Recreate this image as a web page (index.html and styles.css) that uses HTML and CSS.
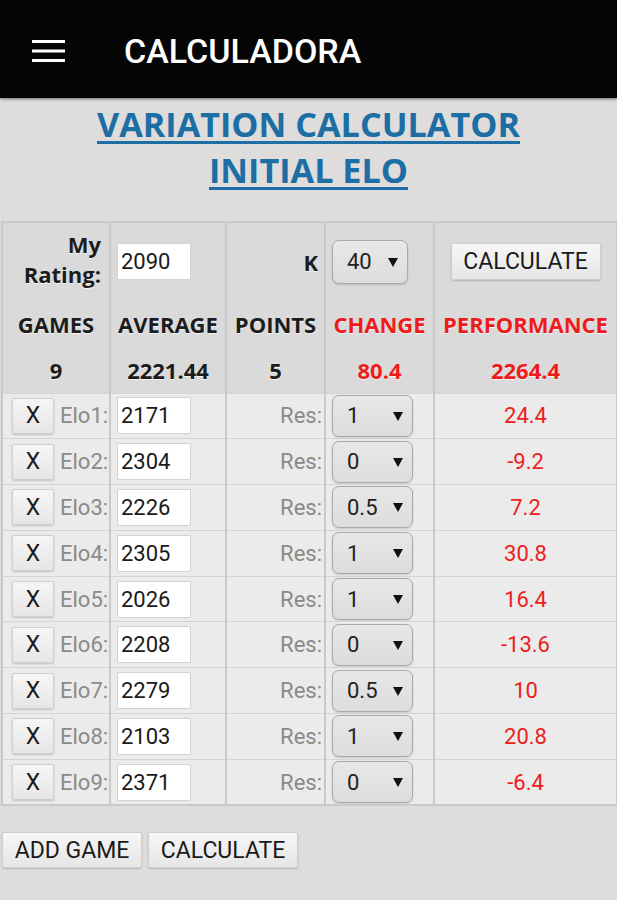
FILE: index.html
```html
<!DOCTYPE html>
<html lang="es">
<head>
<meta charset="utf-8">
<title>Calculadora</title>
<link rel="stylesheet" href="styles.css">
</head>
<body>
<header class="appbar">
  <span class="menu" aria-label="menu">
    <svg width="33" height="22" viewBox="0 0 33 22"><rect x="0" y="0" width="33" height="3" fill="#fff"/><rect x="0" y="9.5" width="33" height="3" fill="#fff"/><rect x="0" y="19" width="33" height="3" fill="#fff"/></svg>
  </span>
  <h1 class="appbar-title">CALCULADORA</h1>
</header>
<main class="content">
  <h2 class="page-title"><a href="#">VARIATION CALCULATOR<br>INITIAL ELO</a></h2>
  <table class="calc">
    <colgroup><col class="c1"><col class="c2"><col class="c3"><col class="c4"><col class="c5"></colgroup>
    <tbody class="summary">
      <tr class="r-top">
        <td class="lbl right rating">My<br>Rating:</td>
        <td class="pad-l"><input class="field" type="text" value="2090"></td>
        <td class="lbl right k">K</td>
        <td class="pad-l"><span class="select sel-k"><span>40</span><svg class="arrow" width="10" height="10" viewBox="0 0 10 10"><path d="M0 1h10L5 10z" fill="#111"/></svg></span></td>
        <td class="center"><button class="btn btn-top">CALCULATE</button></td>
      </tr>
      <tr class="r-head">
        <td>GAMES</td><td>AVERAGE</td><td>POINTS</td><td class="red">CHANGE</td><td class="red">PERFORMANCE</td>
      </tr>
      <tr class="r-vals">
        <td>9</td><td>2221.44</td><td>5</td><td class="red">80.4</td><td class="red">2264.4</td>
      </tr>
    </tbody>
    <tbody class="games">
      <tr><td><span class="game-lbl"><button class="btn btn-x">X</button><span class="elo">Elo1:</span></span></td><td class="pad-l"><input class="field" type="text" value="2171"></td><td class="res">Res:</td><td class="pad-l"><span class="select sel-r"><span>1</span><svg class="arrow" width="10" height="10" viewBox="0 0 10 10"><path d="M0 1h10L5 10z" fill="#111"/></svg></span></td><td class="out">24.4</td></tr>
      <tr><td><span class="game-lbl"><button class="btn btn-x">X</button><span class="elo">Elo2:</span></span></td><td class="pad-l"><input class="field" type="text" value="2304"></td><td class="res">Res:</td><td class="pad-l"><span class="select sel-r"><span>0</span><svg class="arrow" width="10" height="10" viewBox="0 0 10 10"><path d="M0 1h10L5 10z" fill="#111"/></svg></span></td><td class="out">-9.2</td></tr>
      <tr><td><span class="game-lbl"><button class="btn btn-x">X</button><span class="elo">Elo3:</span></span></td><td class="pad-l"><input class="field" type="text" value="2226"></td><td class="res">Res:</td><td class="pad-l"><span class="select sel-r"><span>0.5</span><svg class="arrow" width="10" height="10" viewBox="0 0 10 10"><path d="M0 1h10L5 10z" fill="#111"/></svg></span></td><td class="out">7.2</td></tr>
      <tr><td><span class="game-lbl"><button class="btn btn-x">X</button><span class="elo">Elo4:</span></span></td><td class="pad-l"><input class="field" type="text" value="2305"></td><td class="res">Res:</td><td class="pad-l"><span class="select sel-r"><span>1</span><svg class="arrow" width="10" height="10" viewBox="0 0 10 10"><path d="M0 1h10L5 10z" fill="#111"/></svg></span></td><td class="out">30.8</td></tr>
      <tr><td><span class="game-lbl"><button class="btn btn-x">X</button><span class="elo">Elo5:</span></span></td><td class="pad-l"><input class="field" type="text" value="2026"></td><td class="res">Res:</td><td class="pad-l"><span class="select sel-r"><span>1</span><svg class="arrow" width="10" height="10" viewBox="0 0 10 10"><path d="M0 1h10L5 10z" fill="#111"/></svg></span></td><td class="out">16.4</td></tr>
      <tr><td><span class="game-lbl"><button class="btn btn-x">X</button><span class="elo">Elo6:</span></span></td><td class="pad-l"><input class="field" type="text" value="2208"></td><td class="res">Res:</td><td class="pad-l"><span class="select sel-r"><span>0</span><svg class="arrow" width="10" height="10" viewBox="0 0 10 10"><path d="M0 1h10L5 10z" fill="#111"/></svg></span></td><td class="out">-13.6</td></tr>
      <tr><td><span class="game-lbl"><button class="btn btn-x">X</button><span class="elo">Elo7:</span></span></td><td class="pad-l"><input class="field" type="text" value="2279"></td><td class="res">Res:</td><td class="pad-l"><span class="select sel-r"><span>0.5</span><svg class="arrow" width="10" height="10" viewBox="0 0 10 10"><path d="M0 1h10L5 10z" fill="#111"/></svg></span></td><td class="out">10</td></tr>
      <tr><td><span class="game-lbl"><button class="btn btn-x">X</button><span class="elo">Elo8:</span></span></td><td class="pad-l"><input class="field" type="text" value="2103"></td><td class="res">Res:</td><td class="pad-l"><span class="select sel-r"><span>1</span><svg class="arrow" width="10" height="10" viewBox="0 0 10 10"><path d="M0 1h10L5 10z" fill="#111"/></svg></span></td><td class="out">20.8</td></tr>
      <tr><td><span class="game-lbl"><button class="btn btn-x">X</button><span class="elo">Elo9:</span></span></td><td class="pad-l"><input class="field" type="text" value="2371"></td><td class="res">Res:</td><td class="pad-l"><span class="select sel-r"><span>0</span><svg class="arrow" width="10" height="10" viewBox="0 0 10 10"><path d="M0 1h10L5 10z" fill="#111"/></svg></span></td><td class="out">-6.4</td></tr>
    </tbody>
  </table>
  <div class="actions">
    <button class="btn btn-bottom btn-add">ADD GAME</button>
    <button class="btn btn-bottom btn-calc">CALCULATE</button>
  </div>
</main>
</body>
</html>
```
FILE: styles.css
```css
* { box-sizing: border-box; }
html, body { margin: 0; padding: 0; }
body {
  width: 617px;
  height: 900px;
  overflow: hidden;
  background: #dedddb;
  font-family: Roboto, "Liberation Sans", sans-serif;
  color: #222;
}
.appbar {
  height: 98px;
  background: #050505;
  display: flex;
  align-items: center;
  padding-left: 32px;
  padding-top: 4px;
  box-shadow: 0 1px 3px rgba(0,0,0,0.5);
  position: relative;
}
.menu { display: flex; width: 33px; height: 22px; }
.appbar-title {
  margin: 0 0 0 59px;
  color: #fff;
  font-family: Roboto, sans-serif;
  font-weight: 500;
  font-size: 34px;
  line-height: 40px;
  letter-spacing: 0;
}
.content { padding: 0; }
.page-title {
  margin: 0;
  padding: 3px 0 28px;
  text-align: center;
  font-family: "Open Sans", sans-serif;
  font-weight: 700;
  font-size: 34.2px;
  line-height: 46px;
}
.page-title a { color: #1c6ea4; text-decoration: underline; text-underline-offset: 4px; text-decoration-thickness: 3px; }

.calc {
  margin: 0 1px 0 1px;
  width: 615px;
  border-collapse: collapse;
  table-layout: fixed;
  border: 2px solid #c9c9c9;
  font-family: "Open Sans", sans-serif;
}
.c1 { width: 108px; }
.c2 { width: 116px; }
.c3 { width: 99px; }
.c4 { width: 109px; }
.c5 { width: 183px; }
.calc td {
  border-left: 2px solid #c9c9c9;
  border-right: 2px solid #c9c9c9;
  padding: 0;
  vertical-align: middle;
}
.summary td {
  background: #dadada;
  text-align: center;
  font-weight: 700;
  font-size: 22px;
  color: #1c1c1c;
  text-shadow: 0 1px 0 #f4f4f4;
}
.summary .red, .calc .red { color: #ee1b1b; }
.r-top { height: 78px; }
.r-top td { padding-top: 0; }
.r-head { height: 48px; }
.r-vals { height: 45px; }
.summary td.right { text-align: right; padding-right: 8px; line-height: 30px; }
.summary td.rating { padding-bottom: 6px; }
.summary td.k { padding-right: 6px; }
.summary td.pad-l { text-align: left; padding-left: 6px; }
.summary td.center { text-align: center; }

.field {
  display: block;
  width: 74px;
  height: 37px;
  border: 1px solid #d2d2d2;
  background: #fff;
  font-family: Roboto, sans-serif;
  font-size: 22px;
  color: #1a1a1a;
  padding: 0 0 0 3px;
  margin: 0;
  outline: none;
  border-radius: 1px;
}
.select {
  display: flex;
  align-items: center;
  justify-content: space-between;
  border: 1px solid #a9a9a9;
  border-radius: 7px;
  background: linear-gradient(#e8e8e8, #dcdcdc);
  box-shadow: 0 1px 2px rgba(0,0,0,0.15);
  font-family: Roboto, sans-serif;
  font-weight: 400;
  font-size: 22px;
  color: #222;
  text-shadow: none;
}
.sel-k { width: 76px; height: 44px; padding: 0 9px 0 14px; }
.sel-r { width: 81px; height: 42px; padding: 0 9px 0 14px; }
.arrow { display: block; }

.btn {
  font-family: Roboto, sans-serif;
  font-weight: 400;
  color: #1a1a1a;
  border: 1px solid #cfcfcf;
  background: linear-gradient(#f6f6f6, #e6e6e6);
  box-shadow: 0 1px 2px rgba(0,0,0,0.18);
  border-radius: 2px;
  padding: 0;
  margin: 0;
  text-shadow: none;
}
.btn-top { width: 150px; height: 37px; font-size: 23px; }

.games td { background: #ebebeb; border-top: 1px solid #d4d4d4; height: 45.8px; font-family: Roboto, sans-serif; font-size: 22px; }
.game-lbl { display: flex; align-items: center; gap: 6px; padding-left: 9px; }
.btn-x { width: 42px; height: 36px; font-size: 23px; }
.elo { color: #8a8a8a; font-size: 22px; }
.games td.pad-l { padding-left: 6px; }
.games td.res { text-align: right; padding-right: 2px; color: #8a8a8a; }
.games td.out { text-align: center; color: #ee2020; }

.actions { display: flex; gap: 6px; padding: 26px 0 0 2px; }
.btn-bottom { height: 36px; font-size: 23px; }
.btn-add { width: 140px; }
.btn-calc { width: 150px; }
```
